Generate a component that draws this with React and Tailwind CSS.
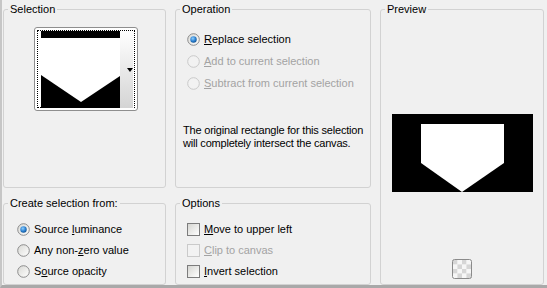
function Radio({ checked, disabled }) {
    return (
        <svg width="13" height="13" viewBox="0 0 13 13" className="shrink-0">
            <defs>
                <linearGradient id="rfill" x1="0" y1="0" x2="1" y2="1">
                    <stop offset="0" stopColor="#d8d8d4" />
                    <stop offset="1" stopColor="#ffffff" />
                </linearGradient>
                <radialGradient id="rdot" cx="0.4" cy="0.35" r="0.7">
                    <stop offset="0" stopColor="#8fd0ff" />
                    <stop offset="0.6" stopColor="#2a7fd0" />
                    <stop offset="1" stopColor="#0f4f8c" />
                </radialGradient>
            </defs>
            <circle
                cx="6.5"
                cy="6.5"
                r="5.8"
                fill={disabled ? '#f2f2f2' : 'url(#rfill)'}
                stroke={disabled ? '#c9c9c9' : '#8c8c8c'}
                strokeWidth="1"
            />
            {checked && <circle cx="6.5" cy="6.5" r="3.2" fill="url(#rdot)" />}
        </svg>
    );
}

function Check({ disabled }) {
    return (
        <span
            className={
                'block w-[13px] h-[13px] shrink-0 border ' +
                (disabled
                    ? 'border-[#cacaca] bg-[#f2f2f2]'
                    : 'border-[#7c7c7c] bg-gradient-to-br from-[#d6d6d2] to-white')
            }
        />
    );
}

function Row({ control, children, disabled, className }) {
    return (
        <div className={'flex items-center gap-[4px] h-[16px] ' + (className || '')}>
            {control}
            <span className={disabled ? 'text-[#a3a3a3]' : 'text-black'}>{children}</span>
        </div>
    );
}

function Group({ title, className, children }) {
    return (
        <fieldset className={'border border-[#d2d2d2] rounded-[3px] ' + (className || '')}>
            <legend className="ml-[4px] px-[2px] leading-[13px]">{title}</legend>
            {children}
        </fieldset>
    );
}

function Checker() {
    const cells = [];
    for (let r = 0; r < 4; r++) {
        for (let c = 0; c < 4; c++) {
            cells.push(
                <rect
                    key={r + '-' + c}
                    x={1 + c * 4.5}
                    y={1 + r * 4.5}
                    width="4.5"
                    height="4.5"
                    fill={(r + c) % 2 ? '#f6f6f6' : '#d6d6d6'}
                />
            );
        }
    }
    return (
        <svg width="20" height="20" viewBox="0 0 20 20">
            {cells}
            <rect x="0.5" y="0.5" width="19" height="19" rx="2" fill="none" stroke="#8a8a8a" />
        </svg>
    );
}

export default function App() {
    return (
        <div
            className="w-[547px] h-[288px] bg-[#f0f0f0] border-l-[2px] border-l-[#c6c6c6] border-b-[3px] border-b-[#a9a9a9] flex gap-[9px] pl-[1px] pt-[3px] text-[11px] leading-[13px] text-black overflow-hidden"
            style={{ fontFamily: '"Liberation Sans", Arial, sans-serif' }}
        >
            {/* left column */}
            <div className="w-[163px] flex flex-col gap-[9px] shrink-0">
                <Group title="Selection" className="h-[185px]">
                    <div className="ml-[30px] mt-[11px] w-[104px] h-[84px] border border-[#8e8e8e] rounded-[3px] bg-white p-[2px]">
                        <div className="w-full h-full border border-dotted border-black flex pl-[3px]">
                            <svg width="79" height="77" viewBox="0 0 79 77" className="shrink-0">
                                <rect width="79" height="77" fill="#000" />
                                <polygon points="0,7 79,7 79,45 40,71 0,44" fill="#fff" />
                            </svg>
                            <div className="relative w-[13px] h-[77px] bg-gradient-to-b from-white to-[#d4d4d4]">
                                <span className="absolute left-[7px] top-[37px] w-0 h-0 border-l-[3px] border-r-[3px] border-t-[4px] border-l-transparent border-r-transparent border-t-black" />
                            </div>
                        </div>
                    </div>
                </Group>
                <Group title="Create selection from:" className="h-[88px]">
                    <div className="ml-[13px] mt-[11px] flex flex-col gap-[5px]">
                        <Row control={<Radio checked />}>
                            Source <span className="underline">l</span>uminance
                        </Row>
                        <Row control={<Radio />}>
                            Any non-<span className="underline">z</span>ero value
                        </Row>
                        <Row control={<Radio />}>
                            S<span className="underline">o</span>urce opacity
                        </Row>
                    </div>
                </Group>
            </div>

            {/* middle column */}
            <div className="w-[196px] flex flex-col gap-[9px] shrink-0">
                <Group title="Operation" className="h-[185px]">
                    <div className="ml-[11px] mt-[15px] flex flex-col gap-[6px]">
                        <Row control={<Radio checked />}>
                            <span className="underline">R</span>eplace selection
                        </Row>
                        <Row control={<Radio disabled />} disabled>
                            <span className="underline">A</span>dd to current selection
                        </Row>
                        <Row control={<Radio disabled />} disabled>
                            <span className="underline">S</span>ubtract from current selection
                        </Row>
                    </div>
                    <p className="ml-[7px] mt-[33px] whitespace-nowrap tracking-[-0.2px]">
                        The original rectangle for this selection
                        <br />
                        will completely intersect the canvas.
                    </p>
                </Group>
                <Group title="Options" className="h-[88px]">
                    <div className="ml-[11px] mt-[11px] flex flex-col gap-[5px]">
                        <Row control={<Check />}>
                            <span className="underline">M</span>ove to upper left
                        </Row>
                        <Row control={<Check disabled />} disabled>
                            <span className="underline">C</span>lip to canvas
                        </Row>
                        <Row control={<Check />}>
                            <span className="underline">I</span>nvert selection
                        </Row>
                    </div>
                </Group>
            </div>

            {/* right column */}
            <div className="w-[164px] flex flex-col shrink-0">
                <Group title="Preview" className="h-[282px]">
                    <div className="mt-[98px] flex justify-center">
                        <svg width="141" height="78" viewBox="0 0 141 78">
                            <rect width="141" height="78" fill="#000" />
                            <polygon points="29,10 112,10 112,49 70,78 29,49" fill="#fff" />
                        </svg>
                    </div>
                    <div className="mt-[67px] flex justify-center">
                        <Checker />
                    </div>
                </Group>
            </div>
        </div>
    );
}
